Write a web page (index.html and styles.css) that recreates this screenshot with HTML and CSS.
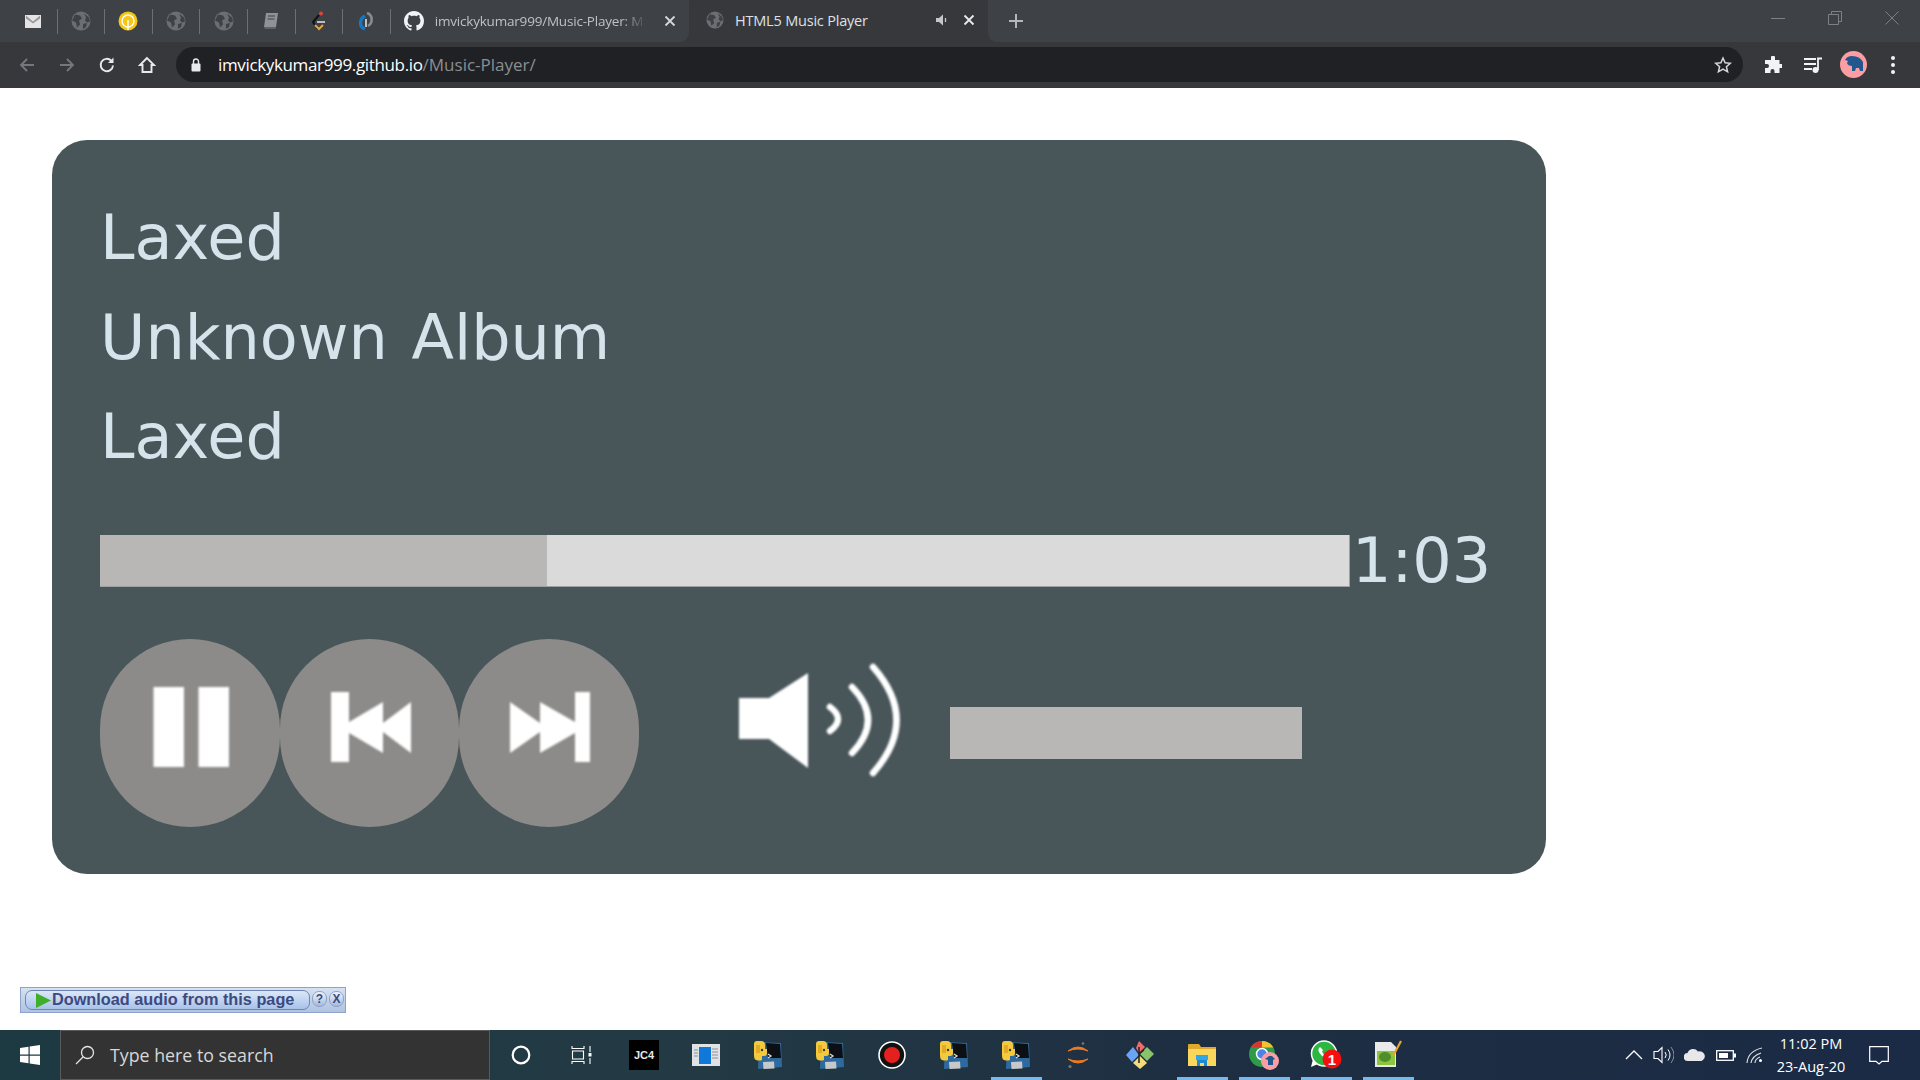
FILE: index.html
```html
<!DOCTYPE html>
<html lang="en">
  <head>
    <meta charset="UTF-8" />
    <meta name="viewport" content="width=device-width, initial-scale=1.0" />
    <title>HTML5 Music Player</title>
    <link rel="stylesheet" href="styles.css">
  </head>
  <body>
    <svg class="defs" width="0" height="0">
      <symbol id="globe" viewBox="0 0 20 20">
        <circle cx="10" cy="10" r="9.5" fill="#6b6e72"/>
        <path d="M4 3.5l5 1 2 3-3 2 1 4-3 3-1-5-4-2zM13 2.5l5 4 1 4-3 1-2-2 1-3zM12 13l4-1-1 4-3 2z" fill="#3e4145"/>
      </symbol>
      <symbol id="py" viewBox="0 0 30 30">
        <path d="M6 2l22 1 1 24-24 2z" fill="#2f6a9e"/>
        <path d="M13 3l14 1 1 14-13 0z" fill="#0c0f14"/>
        <path d="M15 14l3 2-3 2" fill="none" stroke="#ddd" stroke-width="1.3"/>
        <path d="M10 22l11-.5 .5 7-11 .5z" fill="#c6c8ca"/>
        <path d="M1 4q0-3 3-3h4q4 0 4 4v4h2v4q0 3-3 3h-2v4q-3 1-6 0q-2-1-2-4z" fill="#f4c93c"/>
        <path d="M3 5h4v8H3z" fill="#e2a92a"/>
        <circle cx="9" cy="10" r="1.2" fill="#3d3a20"/>
      </symbol>
    </svg>

    <div class="tabstrip">
      <div class="tabs-left">
        <div class="pinned">
          <svg width="20" height="20" viewBox="0 0 20 20"><rect x="2" y="4" width="16" height="13" fill="#e4e4e4"/><path d="M3 4.5l7 6 7-6v3l-7 5-7-5z" fill="#9a9a9a"/></svg>
        </div>
        <div class="pinned"><svg width="20" height="20"><use href="#globe"/></svg></div>
        <div class="pinned">
          <svg width="20" height="20" viewBox="0 0 20 20"><circle cx="10" cy="10" r="9.5" fill="#f5c518"/><circle cx="10" cy="10" r="6" fill="none" stroke="#fff" stroke-width="1.4"/><path d="M10 9v10" stroke="#fff" stroke-width="1.4"/></svg>
        </div>
        <div class="pinned"><svg width="20" height="20"><use href="#globe"/></svg></div>
        <div class="pinned"><svg width="20" height="20"><use href="#globe"/></svg></div>
        <div class="pinned">
          <svg width="20" height="20" viewBox="0 0 20 20"><path d="M5 2h12l-2 14H3z" fill="#909396"/><path d="M3 16h12l-.4 2H4z" fill="#5f6266"/><path d="M7 5h7M6.5 8h7" stroke="#3e4145" stroke-width="1.2"/></svg>
        </div>
        <div class="pinned">
          <svg width="20" height="20" viewBox="0 0 20 20"><circle cx="12" cy="2.5" r="2" fill="#d8483a"/><path d="M10 4L4 11l5 7" fill="none" stroke="#111" stroke-width="2"/><path d="M6 14l4 4 4-4" fill="none" stroke="#e8a33d" stroke-width="2"/><path d="M8 11h8" stroke="#ddd" stroke-width="1.6"/></svg>
        </div>
        <div class="pinned">
          <svg width="20" height="20" viewBox="0 0 20 20"><path d="M9 18C3 16 3 8 9 5" fill="none" stroke="#1678c2" stroke-width="3.4"/><path d="M11 2c6 2 6 10 1 13" fill="none" stroke="#888b8f" stroke-width="2.6"/><path d="M10 8v8" stroke="#dfe3e6" stroke-width="1.6"/></svg>
        </div>
        <div class="tab">
          <svg class="tab-icon" width="20" height="20" viewBox="0 0 16 16"><path fill="#f1f3f4" d="M8 0C3.58 0 0 3.58 0 8c0 3.54 2.29 6.53 5.47 7.59.4.07.55-.17.55-.38 0-.19-.01-.82-.01-1.49-2.01.37-2.53-.49-2.69-.94-.09-.23-.48-.94-.82-1.13-.28-.15-.68-.52-.01-.53.63-.01 1.08.58 1.23.82.72 1.21 1.87.87 2.33.66.07-.52.28-.87.51-1.07-1.78-.2-3.64-.89-3.64-3.95 0-.87.31-1.59.82-2.15-.08-.2-.36-1.02.08-2.12 0 0 .67-.21 2.2.82.64-.18 1.32-.27 2-.27s1.36.09 2 .27c1.53-1.04 2.2-.82 2.2-.82.44 1.1.16 1.92.08 2.12.51.56.82 1.27.82 2.15 0 3.07-1.87 3.75-3.65 3.95.29.25.54.73.54 1.48 0 1.07-.01 1.93-.01 2.2 0 .21.15.46.55.38A8.01 8.01 0 0 0 16 8c0-4.42-3.58-8-8-8z"/></svg>
          <span class="tab-title faded">imvickykumar999/Music-Player: M</span>
          <span class="tab-close">
            <svg width="12" height="12" viewBox="0 0 12 12"><path d="M1.5 1.5l9 9m0-9l-9 9" stroke="#d5d7da" stroke-width="1.8"/></svg>
          </span>
        </div>
      </div>

      <div class="tab tab-active">
        <svg class="tab-icon" width="18" height="18"><use href="#globe"/></svg>
        <span class="tab-title">HTML5 Music Player</span>
        <svg class="tab-audio" width="12" height="12" viewBox="0 0 12 12"><path d="M0 4h3l4-3.500v11L3 8H0z" fill="#c4c6c9"/><path d="M9.500 4v4" stroke="#c4c6c9" stroke-width="1.300"/></svg>
        <span class="tab-close">
          <svg width="12" height="12" viewBox="0 0 12 12"><path d="M1.500 1.500l9 9m0-9l-9 9" stroke="#e8eaed" stroke-width="1.800"/></svg>
        </span>
      </div>

      <div class="tabs-right">
        <svg class="new-tab" width="16" height="16" viewBox="0 0 16 16"><path d="M8 1v14M1 8h14" stroke="#b4b7ba" stroke-width="2"/></svg>
        <div class="win-controls">
          <span class="win-btn"><svg width="14" height="14" viewBox="0 0 14 14"><path d="M0 7.500h14" stroke="#7d8084"/></svg></span>
          <span class="win-btn"><svg width="14" height="14" viewBox="0 0 14 14"><path d="M.5 3.500h10v10H.5zM3.500 3.500V.5h10v10h-3" fill="none" stroke="#7d8084"/></svg></span>
          <span class="win-btn"><svg width="14" height="14" viewBox="0 0 14 14"><path d="M.5.5l13 13m0-13l-13 13" stroke="#7d8084"/></svg></span>
        </div>
      </div>
    </div>

    <div class="toolbar">
      <div class="nav-btn"><svg width="18" height="18" viewBox="0 0 18 18"><path d="M16 9H3M9 3L3 9l6 6" fill="none" stroke="#74777b" stroke-width="1.800"/></svg></div>
      <div class="nav-btn"><svg width="18" height="18" viewBox="0 0 18 18"><path d="M2 9h13M9 3l6 6-6 6" fill="none" stroke="#74777b" stroke-width="1.800"/></svg></div>
      <div class="nav-btn"><svg width="18" height="18" viewBox="0 0 18 18"><path d="M15 9.500A6.200 6.200 0 1 1 13.200 4.600" fill="none" stroke="#e8eaed" stroke-width="1.900"/><path d="M15.500 1.500v5.500H10z" fill="#e8eaed"/></svg></div>
      <div class="nav-btn"><svg width="18" height="18" viewBox="0 0 18 18"><path d="M9 2L2 9h2.500v7h9V9H16z" fill="none" stroke="#e8eaed" stroke-width="1.900"/></svg></div>
      <div class="omnibox">
        <svg width="16" height="16" viewBox="0 0 16 16"><rect x="3.500" y="6.500" width="9" height="8" rx="1" fill="#e8eaed"/><path d="M5.500 7V4.500a2.500 2.500 0 0 1 5 0V7" fill="none" stroke="#e8eaed" stroke-width="1.400"/></svg>
        <span class="url"><b>imvickykumar999.github.io</b>/Music-Player/</span>
        <svg class="star" width="18" height="18" viewBox="0 0 18 18"><path d="M9 2l2.100 4.800 5.200.5-3.900 3.400 1.200 5.100L9 13.100l-4.600 2.700 1.200-5.100-3.900-3.400 5.200-.5z" fill="none" stroke="#d5d7da" stroke-width="1.500"/></svg>
      </div>
      <div class="toolbar-right">
        <div class="nav-btn"><svg width="18" height="18" viewBox="0 0 18 18"><path d="M7 1.500a2 2 0 0 1 4 0V4h4.500v4H18v4h-2.500v5H10.500v-2a2 2 0 0 0-4 0v2H1v-5h2a2 2 0 0 0 0-4H1V4h6z" fill="#f1f3f4"/></svg></div>
        <div class="nav-btn"><svg width="20" height="18" viewBox="0 0 20 18"><path d="M1 3h12M1 8h12M1 13h8" stroke="#f1f3f4" stroke-width="1.800"/><circle cx="12.500" cy="14" r="3" fill="#f1f3f4"/><path d="M15 14V2.500h4" fill="none" stroke="#f1f3f4" stroke-width="1.800"/></svg></div>
        <div class="nav-btn">
          <svg width="27" height="27" viewBox="0 0 27 27"><circle cx="13.500" cy="13.500" r="13.500" fill="#fa9ea3"/><path d="M5 9q2-4 7-4 8 0 11 6v9h-3l-1-3h-3l-1 3h-3v-5q-4 0-5-3l1-2z" fill="#22568f"/></svg>
        </div>
        <div class="nav-btn"><svg width="6" height="20" viewBox="0 0 6 20"><circle cx="3" cy="3" r="2" fill="#f1f3f4"/><circle cx="3" cy="10" r="2" fill="#f1f3f4"/><circle cx="3" cy="17" r="2" fill="#f1f3f4"/></svg></div>
      </div>
    </div>

    <main class="page">
      <section class="player">
        <div class="meta">Laxed</div>
        <div class="meta">Unknown Album</div>
        <div class="meta">Laxed</div>

        <div class="seek-row">
          <div class="seek"><div class="seek-played"></div></div>
          <span class="time">1:03</span>
        </div>

        <div class="controls">
          <button class="round-btn">
            <svg class="blurred" width="180" height="187" viewBox="0 0 180 187"><path d="M53.500 48H84v80H53.500zM98.500 48H129v80H98.500z" fill="#fff"/></svg>
          </button>
          <button class="round-btn">
            <svg class="blurred" width="180" height="187" viewBox="0 0 180 187"><path d="M51 53h18v30l34-20v21l28-21v51l-28-21v21L69 94v29H51z" fill="#fff"/></svg>
          </button>
          <button class="round-btn">
            <svg class="blurred" width="180" height="187" viewBox="0 0 180 187"><path d="M131 53h-15v30L81 63v21L51 63v51l30-21v21l35-20v29h15z" fill="#fff"/></svg>
          </button>
          <svg class="volume-icon blurred" width="180" height="187" viewBox="0 0 180 187">
            <path d="M11 59h30l39-25v95L41 100H11z" fill="#fff"/>
            <path d="M102 68q16 12 0 24M124 48q32 33 0 66M145 28q47 53 0 106" fill="none" stroke="#fff" stroke-width="6.500" stroke-linecap="round"/>
          </svg>
          <div class="volume"></div>
        </div>
      </section>

      <div class="download-bar">
        <div class="download-btn">
          <svg width="15" height="15" viewBox="0 0 15 15"><path d="M0 0l15 7.500L0 15z" fill="#3fae2a"/></svg>
          <span>Download audio from this page</span>
        </div>
        <span class="mini-btn">?</span>
        <span class="mini-btn">X</span>
      </div>
    </main>

    <footer class="taskbar">
      <div class="start">
        <svg width="20" height="20" viewBox="0 0 20 20"><path d="M0 3l8.500-1.300v7.800H0zM9.700 1.500L20 0v9.500H9.700zM0 10.700h8.500v7.600L0 17zM9.700 10.700H20V20L9.700 18.500z" fill="#fff"/></svg>
      </div>
      <div class="search">
        <svg width="20" height="20" viewBox="0 0 20 20"><circle cx="12.500" cy="7.500" r="6" fill="none" stroke="#e4e4e4" stroke-width="1.300"/><path d="M8 12l-7 7" stroke="#e4e4e4" stroke-width="1.300"/></svg>
        <span>Type here to search</span>
      </div>
      <div class="task-sys">
        <svg width="20" height="20" viewBox="0 0 20 20"><circle cx="10" cy="10" r="8.300" fill="none" stroke="#fff" stroke-width="2.200"/></svg>
      </div>
      <div class="task-sys">
        <svg width="22" height="20" viewBox="0 0 22 20"><path d="M1 1v2.500h12V1M1 19v-2.500h12V19M1.500 6h11v8h-11zM19 1v6M19 13v6" fill="none" stroke="#fff" stroke-width="1.100"/><rect x="17.500" y="8" width="3" height="3.500" fill="#fff"/></svg>
      </div>

      <div class="task-app">
        <span class="jc4">JC4</span>
      </div>
      <div class="task-app">
        <svg width="28" height="22" viewBox="0 0 28 22"><rect width="28" height="22" fill="#dfe3e6"/><rect x="7" y="3" width="12" height="17" fill="#0f78d8"/><path d="M20 5h6M20 8h6M20 11h6M20 14h6M2 6h4M2 9h4M2 12h4" stroke="#8d9196"/></svg>
      </div>
      <div class="task-app"><svg width="30" height="30"><use href="#py"/></svg></div>
      <div class="task-app"><svg width="30" height="30"><use href="#py"/></svg></div>
      <div class="task-app">
        <svg width="28" height="28" viewBox="0 0 28 28"><circle cx="14" cy="14" r="13" fill="#111" stroke="#fff" stroke-width="1.600"/><circle cx="14" cy="14" r="8" fill="#e4211f"/></svg>
      </div>
      <div class="task-app"><svg width="30" height="30"><use href="#py"/></svg></div>
      <div class="task-app task-open"><svg width="30" height="30"><use href="#py"/></svg></div>
      <div class="task-app">
        <svg width="28" height="28" viewBox="0 0 28 28"><path d="M4 10q10-8 20 0q-10-4-20 0zM4 18q10 8 20 0q-10 4-20 0z" fill="#f0791f" stroke="#f0791f"/><circle cx="19" cy="2.500" r="1.300" fill="#777"/><circle cx="6" cy="25.500" r="1.600" fill="#777"/></svg>
      </div>
      <div class="task-app">
        <svg width="30" height="30" viewBox="0 0 30 30"><path d="M14 1l6 6-6 6-3-5z" fill="#f06c6c"/><path d="M8 7l6 8-7 7-6-7z" fill="#6aa5f5"/><path d="M22 7l7 7-7 7-7-7z" fill="#8ac46a"/><path d="M15 16l7 7-7 6-7-6z" fill="#f5dd7a"/><path d="M14 7v16M14 14l5-4" stroke="#222" stroke-width="1.500"/></svg>
      </div>
      <div class="task-app task-open">
        <svg width="28" height="24" viewBox="0 0 28 24"><path d="M0 2q0-1 1-1h10l2 3h15v19H0z" fill="#e2a82a"/><path d="M0 6h28v17H0z" fill="#f9d75d"/><path d="M9 23v-6h10v6h-3v-3h-4v3z" fill="#1e88d2"/><path d="M8 12h12v5H8z" fill="#31a6e6"/></svg>
      </div>
      <div class="task-app task-open">
        <svg width="32" height="30" viewBox="0 0 32 30"><circle cx="14" cy="14" r="13" fill="#2e9b48"/><path d="M14 1a13 13 0 0 1 11.300 6.500H14z" fill="#f2c230"/><path d="M2.700 7.500A13 13 0 0 1 14 1l-1 6.500z" fill="#d8382c"/><circle cx="14" cy="14" r="5.500" fill="#4a84e6" stroke="#fff" stroke-width="1.500"/><circle cx="22" cy="21" r="9" fill="#fa9ea3"/><path d="M17 19l4-3h3l3 3-2 1v5h-5v-5z" fill="#22568f"/></svg>
      </div>
      <div class="task-app task-open">
        <svg width="32" height="30" viewBox="0 0 32 30"><path d="M1 27l2-8 5 5z" fill="#fff"/><circle cx="14" cy="13.500" r="12.500" fill="#2cb742" stroke="#fff" stroke-width="1.500"/><path d="M10 7q-2 1-1.500 4 2 5 7 7 3 0 4-2l-3-2-1.500 1q-2-1-3-3.500l1-1.500z" fill="#fff"/><circle cx="22" cy="19" r="9.500" fill="#f50f0f"/><text class="badge-num" x="22" y="24.500" text-anchor="middle">1</text></svg>
      </div>
      <div class="task-app task-open">
        <svg width="30" height="30" viewBox="0 0 30 30"><path d="M2 2h16l5 5v20H2z" fill="#e7eae8"/><path d="M4 11h18v14H4z" fill="#8cc63e"/><ellipse cx="12" cy="17" rx="6" ry="5" fill="#4e8e2c"/><path d="M20 16L28 1" stroke="#e8a52d" stroke-width="2.200"/></svg>
      </div>

      <div class="tray">
        <svg width="18" height="10" viewBox="0 0 18 10"><path d="M1 9l8-8 8 8" fill="none" stroke="#fff" stroke-width="1.300"/></svg>
        <svg width="21" height="20" viewBox="0 0 21 20"><path d="M1 6.500h4l4-4v15l-4-4H1z" fill="none" stroke="#fff" stroke-width="1.100"/><path d="M12 7q2.500 3 0 6M15 4.500q4 5.500 0 11" fill="none" stroke="#fff" stroke-width="1"/><path d="M18 2q6 8 0 16" fill="none" stroke="#8a8f96" stroke-width="1"/></svg>
        <svg width="22" height="14" viewBox="0 0 22 14"><path d="M4 13a4 4 0 0 1-.5-8A6 6 0 0 1 14 3.500 4.800 4.800 0 0 1 17.500 13z" fill="#e6e8ea"/></svg>
        <svg width="20" height="11" viewBox="0 0 20 11"><rect x=".7" y=".7" width="16.600" height="9.600" fill="none" stroke="#fff" stroke-width="1.300"/><rect x="3" y="3" width="9" height="5" fill="#fff"/><rect x="18" y="3.500" width="2" height="4" fill="#fff"/></svg>
        <svg width="18" height="18" viewBox="0 0 18 18"><circle cx="14.500" cy="14.500" r="1.500" fill="#fff"/><path d="M1 17Q2 5 16 2M5 17q1-7 10-10M9 17q0-4 5-6" fill="none" stroke="#dfe2e5" stroke-width="1.100"/></svg>
      </div>
      <div class="clock">
        <span>11:02 PM</span>
        <span>23-Aug-20</span>
      </div>
      <div class="notify">
        <svg width="20" height="19" viewBox="0 0 20 19"><path d="M.7.700h18.600v14.600h-6.300L10 18l-3-2.700H.7z" fill="none" stroke="#fff" stroke-width="1.200"/></svg>
      </div>
    </footer>
  </body>
</html>
```

FILE: styles.css
```css
html,
body {
  margin: 0;
  height: 100%;
}

body {
  display: flex;
  flex-direction: column;
  height: 100vh;
  overflow: hidden;
  background-color: #ffffff;
  font-family: "Open Sans", "Liberation Sans", sans-serif;
}

.defs {
  position: absolute;
}

/* browser window */

.tabstrip {
  display: flex;
  height: 47px;
  background-color: #36383c;
}

.tabs-left,
.tabs-right {
  display: flex;
  align-items: center;
  height: 42px;
  background-color: #3e4145;
}

.tabs-left {
  width: 689px;
  box-sizing: border-box;
  padding-left: 10px;
  border-bottom-right-radius: 9px;
}

.tabs-right {
  flex: 1;
  padding-left: 20px;
  border-bottom-left-radius: 9px;
}

.pinned {
  display: flex;
  align-items: center;
  justify-content: center;
  box-sizing: border-box;
  width: 47.6px;
  height: 25px;
  border-right: 1px solid #6c6f73;
}

.tab {
  display: flex;
  align-items: center;
  flex: 1;
  min-width: 0;
  padding: 0 13px;
  font-size: 13.5px;
  letter-spacing: -0.2px;
  color: #bdc1c6;
}

.tab-icon {
  flex: none;
  margin-right: 11px;
}

.tab-title {
  flex: 1;
  min-width: 0;
  white-space: nowrap;
}

.faded {
  -webkit-mask-image: linear-gradient(to right, #000 88%, transparent);
  mask-image: linear-gradient(to right, #000 88%, transparent);
}

.tab-close {
  display: flex;
  margin-left: 17px;
}

.tab-active {
  flex: none;
  box-sizing: border-box;
  width: 299px;
  height: 47px;
  padding: 0 13px 7px 17px;
  background-color: #36383c;
  border-radius: 9px 9px 0 0;
  font-size: 14.5px;
  color: #dfe1e5;
}

.tab-audio {
  flex: none;
}

.tab-active .tab-close {
  margin-left: 15px;
}

.win-controls {
  display: flex;
  margin-left: auto;
  margin-bottom: 6px;
}

.win-btn {
  display: flex;
  justify-content: center;
  width: 57px;
}

.toolbar {
  display: flex;
  align-items: flex-start;
  box-sizing: border-box;
  height: 41px;
  padding-left: 7px;
  background-color: #36383c;
}

.nav-btn {
  display: flex;
  align-items: center;
  justify-content: center;
  width: 40px;
  height: 35px;
}

.omnibox {
  display: flex;
  align-items: center;
  flex: 1;
  height: 35px;
  margin-left: 9px;
  padding: 0 11px 0 12px;
  background-color: #202124;
  border-radius: 18px;
  font-size: 17px;
  color: #8b8e92;
}

.url {
  margin-left: 14px;
}

.url b {
  font-weight: 400;
  letter-spacing: -0.35px;
  color: #ffffff;
}

.star {
  margin-left: auto;
}

.toolbar-right {
  display: flex;
  width: 177px;
  box-sizing: border-box;
  padding-left: 10px;
}

/* player */

.page {
  display: flex;
  flex-direction: column;
  flex: 1;
}

.player {
  box-sizing: border-box;
  width: 1494px;
  height: 734px;
  margin: 52px 0 0 52px;
  padding: 48px;
  background-color: #48565a;
  border-radius: 35px;
}

.meta {
  height: 99.5px;
  line-height: 99.5px;
  font-family: "DejaVu Sans", sans-serif;
  font-size: 62px;
  word-spacing: 4px;
  color: #d5e3ea;
}

.seek-row {
  display: flex;
  align-items: center;
  height: 52px;
  margin-top: 48px;
}

.seek {
  flex: none;
  box-sizing: border-box;
  width: 1250px;
  height: 52px;
  background-color: #dadada;
  border-right: 1px solid #a0a0a0;
  border-bottom: 1px solid #a0a0a0;
}

.seek-played {
  width: 447px;
  height: 100%;
  background-color: #b9b7b5;
}

.time {
  margin-left: 2px;
  font-family: "DejaVu Sans", sans-serif;
  font-size: 62px;
  line-height: 52px;
  color: #d5e3ea;
}

.controls {
  display: flex;
  align-items: center;
  margin-top: 52px;
}

.round-btn {
  flex: none;
  width: 179.6px;
  height: 188px;
  padding: 0;
  border: 0;
  background-color: #8c8b89;
  border-radius: 90px;
}

.round-btn svg {
  display: block;
}

.blurred {
  filter: blur(1px);
}

.volume-icon {
  flex: none;
  margin-left: 89px;
}

.volume {
  width: 352px;
  height: 52px;
  margin-left: 42px;
  background-color: #b9b7b5;
}

/* extension bar */

.download-bar {
  display: flex;
  align-items: center;
  box-sizing: border-box;
  width: 326px;
  height: 26px;
  margin: 113px 0 0 20px;
  padding-left: 4px;
  background: linear-gradient(#d6e1f1, #b0c3e0);
  border: 1px solid #8da3cb;
  font-family: "Liberation Sans", sans-serif;
}

.download-btn {
  display: flex;
  align-items: center;
  flex: none;
  box-sizing: border-box;
  width: 285px;
  height: 20px;
  padding: 0 0 2px 10px;
  background: linear-gradient(#dbe7f8, #a9c2ea);
  border: 1px solid #6f85b5;
  border-radius: 7px;
  font-size: 16.3px;
  font-weight: 700;
  color: #3c4a80;
}

.download-btn svg {
  margin-top: 2px;
}

.download-btn span {
  margin-left: 1px;
}

.mini-btn {
  display: flex;
  align-items: center;
  justify-content: center;
  box-sizing: border-box;
  width: 15px;
  height: 16px;
  margin-left: 2px;
  margin-bottom: 2px;
  background: linear-gradient(#f0f4fa, #a3b9de);
  border: 1px solid #8da3cb;
  border-radius: 7px;
  font-size: 12px;
  font-weight: 700;
  color: #3c4a80;
}

/* windows taskbar */

.taskbar {
  display: flex;
  align-items: center;
  height: 50px;
  background: linear-gradient(to right, #1d3942 0%, #233a44 35%, #1e2f42 60%, #1b2a45 100%);
}

.start {
  display: flex;
  align-items: center;
  justify-content: center;
  width: 60px;
}

.search {
  display: flex;
  align-items: center;
  box-sizing: border-box;
  width: 430px;
  height: 50px;
  padding-left: 14px;
  background-color: #333333;
  border: 1px solid #5a5a5a;
  font-size: 17.8px;
  color: #d8d8d8;
}

.search span {
  margin-left: 15px;
}

.task-sys {
  display: flex;
  align-items: center;
  justify-content: center;
  width: 61.5px;
}

.task-app {
  position: relative;
  display: flex;
  align-items: center;
  justify-content: center;
  width: 62px;
  height: 50px;
}

.task-open::after {
  content: "";
  position: absolute;
  left: 5.5px;
  right: 5.5px;
  bottom: 0;
  height: 3px;
  background-color: #76b9ed;
}

.jc4 {
  display: flex;
  align-items: center;
  justify-content: center;
  width: 30px;
  height: 30px;
  background-color: #000000;
  font-family: "Liberation Sans", sans-serif;
  font-size: 11px;
  font-weight: 700;
  color: #e8e8e8;
}

.badge-num {
  font-family: "Liberation Sans", sans-serif;
  font-size: 15px;
  font-weight: 700;
  fill: #ffffff;
}

.tray {
  display: flex;
  align-items: center;
  justify-content: space-between;
  width: 139px;
  margin-left: auto;
}

.clock {
  display: flex;
  flex-direction: column;
  align-items: center;
  width: 90px;
  margin-left: 2px;
  font-size: 14.5px;
  line-height: 23px;
  color: #ffffff;
}

.notify {
  display: flex;
  justify-content: center;
  width: 46px;
  margin-left: 0;
  margin-right: 18px;
}
```
